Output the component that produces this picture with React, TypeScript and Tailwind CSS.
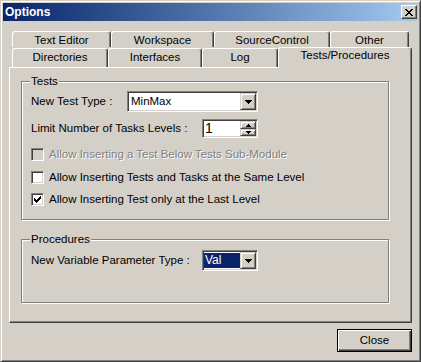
import React from "react";

const sunken =
  "border border-t-[#808080] border-l-[#808080] border-r-white border-b-white shadow-[inset_1px_1px_#404040,inset_-1px_-1px_#d4d0c8] p-px";
const raised =
  "border border-t-[#d4d0c8] border-l-[#d4d0c8] border-r-[#404040] border-b-[#404040] shadow-[inset_1px_1px_#fff,inset_-1px_-1px_#808080] bg-[#d4d0c8]";

function DownArrow() {
  return (
    <svg width="7" height="4" viewBox="0 0 7 4" shapeRendering="crispEdges">
      <path d="M0 0h7v1H0zM1 1h5v1H1zM2 2h3v1H2zM3 3h1v1H3z" fill="#000" />
    </svg>
  );
}

function SmallUp() {
  return (
    <svg width="5" height="3" viewBox="0 0 5 3" shapeRendering="crispEdges">
      <path d="M2 0h1v1H2zM1 1h3v1H1zM0 2h5v1H0z" fill="#000" />
    </svg>
  );
}

function SmallDown() {
  return (
    <svg width="5" height="3" viewBox="0 0 5 3" shapeRendering="crispEdges">
      <path d="M0 0h5v1H0zM1 1h3v1H1zM2 2h1v1H2z" fill="#000" />
    </svg>
  );
}

function CheckMark() {
  return (
    <svg width="7" height="7" viewBox="0 0 7 7" shapeRendering="crispEdges">
      <path
        d="M6 0h1v1H6zM5 1h2v1H5zM0 2h1v1H0zM4 2h3v1H4zM0 3h2v1H0zM3 3h3v1H3zM0 4h5v1H0zM1 5h3v1H1zM2 6h1v1H2z"
        fill="#000"
      />
    </svg>
  );
}

function XGlyph() {
  return (
    <svg width="8" height="7" viewBox="0 0 8 7" shapeRendering="crispEdges">
      <path
        d="M0 0h2v1H0zM6 0h2v1H6zM1 1h2v1H1zM5 1h2v1H5zM2 2h2v1H2zM4 2h2v1H4zM3 3h2v1H3zM2 4h2v1H2zM4 4h2v1H4zM1 5h2v1H1zM5 5h2v1H5zM0 6h2v1H0zM6 6h2v1H6z"
        fill="#000"
      />
    </svg>
  );
}

function Combo({
  className,
  value,
  selected,
}: {
  className: string;
  value: string;
  selected?: boolean;
}) {
  return (
    <div className={`flex h-[21px] bg-white ${sunken} ${className}`}>
      <div className="flex-1 flex items-center min-w-0">
        {selected ? (
          <span className="my-px h-[15px] flex-1 bg-[#0a246a] text-white pl-px leading-[15px] text-[12px]">
            {value}
          </span>
        ) : (
          <span className="pl-[2px]">{value}</span>
        )}
      </div>
      <div className={`w-[16px] h-full flex items-center justify-center ${raised}`}>
        <DownArrow />
      </div>
    </div>
  );
}

function Check({ checked, disabled }: { checked?: boolean; disabled?: boolean }) {
  return (
    <div
      className={`w-[13px] h-[13px] shrink-0 flex items-center justify-center ${sunken} ${
        disabled ? "bg-[#d4d0c8]" : "bg-white"
      }`}
    >
      {checked && <CheckMark />}
    </div>
  );
}

const tabBase =
  "border-t border-l border-r border-t-white border-l-white border-r-[#404040] shadow-[inset_-1px_0_#808080] rounded-t-[3px] bg-[#d4d0c8] text-center whitespace-nowrap";

export default function App() {
  return (
    <div className="w-[421px] h-[362px] bg-[#d4d0c8] border border-t-[#d4d0c8] border-l-[#d4d0c8] border-r-[#404040] border-b-[#404040] shadow-[inset_1px_1px_#fff,inset_-1px_-1px_#808080] p-[2px] flex flex-col [font-family:'Liberation_Sans',Arial,sans-serif] text-[11.5px] leading-[13px] text-black">
      {/* Title bar */}
      <div className="h-[18px] shrink-0 flex items-center pl-[2px] bg-gradient-to-r from-[#0a246a] to-[#a6caf0]">
        <span className="text-white font-bold text-[12px]">Options</span>
        <div className="ml-auto mr-[1px] w-[16px] h-[14px] flex items-center justify-center bg-[#d4d0c8] border border-t-white border-l-white border-r-[#404040] border-b-[#404040] shadow-[inset_-1px_-1px_#808080]">
          <XGlyph />
        </div>
      </div>

      <div className="pl-[6px] flex flex-col">
        {/* Tab row 1 */}
        <div className="mt-[10px] ml-[3px] flex h-[16px]">
          <div className={`${tabBase} w-[99px] h-[16px] pt-[2px]`}>Text Editor</div>
          <div className={`${tabBase} w-[103px] h-[16px] pt-[2px]`}>Workspace</div>
          <div className={`${tabBase} w-[116px] h-[16px] pt-[2px]`}>SourceControl</div>
          <div className={`${tabBase} w-[79px] h-[16px] pt-[2px]`}>Other</div>
        </div>
        {/* Tab row 2 */}
        <div className="ml-[3px] flex items-end h-[20px]">
          <div className={`${tabBase} w-[96px] h-[19px] pt-[2px]`}>Directories</div>
          <div className={`${tabBase} w-[94px] h-[19px] pt-[2px]`}>Interfaces</div>
          <div className={`${tabBase} w-[76px] h-[19px] pt-[2px]`}>Log</div>
          <div className={`${tabBase} relative z-10 w-[134px] h-[21px] -mb-px pt-[1px]`}>
            Tests/Procedures
          </div>
        </div>

        {/* Panel */}
        <div className="relative w-[403px] h-[256px] border border-t-white border-l-white border-r-[#404040] border-b-[#404040] shadow-[inset_-1px_-1px_#808080] pt-[13px] pl-[11px] flex flex-col">
          {/* Tests group */}
          <div className="relative w-[368px] h-[139px] border border-[#808080] shadow-[inset_1px_1px_#fff,1px_1px_#fff] pt-[9px] pl-[9px] flex flex-col">
            <span className="absolute left-[8px] top-[-7px] px-px bg-[#d4d0c8] leading-[13px]">Tests</span>
            <div className="flex items-center h-[21px]">
              <span className="w-[96px]">New Test Type :</span>
              <Combo className="w-[131px]" value="MinMax" />
            </div>
            <div className="mt-[7px] flex items-center h-[19px]">
              <span className="w-[171px]">Limit Number of Tasks Levels :</span>
              <div className={`flex h-[19px] w-[56px] bg-white ${sunken}`}>
                <div className="flex-1 pl-px flex items-center text-[14px] leading-[15px]">1</div>
                <div className="w-[16px] flex flex-col">
                  <div className={`h-[8px] flex items-center justify-center ${raised}`}>
                    <SmallUp />
                  </div>
                  <div className={`flex-1 flex items-center justify-center ${raised}`}>
                    <SmallDown />
                  </div>
                </div>
              </div>
            </div>
            <div className="mt-[10px] flex items-center h-[13px] gap-[5px]">
              <Check disabled />
              <span className="text-[#808080] [text-shadow:1px_1px_0_#fff]">
                Allow Inserting a Test Below Tests Sub-Module
              </span>
            </div>
            <div className="mt-[10px] flex items-center h-[13px] gap-[5px]">
              <Check />
              <span>Allow Inserting Tests and Tasks at the Same Level</span>
            </div>
            <div className="mt-[9px] flex items-center h-[13px] gap-[5px]">
              <Check checked />
              <span>Allow Inserting Test only at the Last Level</span>
            </div>
          </div>

          {/* Procedures group */}
          <div className="relative mt-[19px] w-[368px] h-[64px] border border-[#808080] shadow-[inset_1px_1px_#fff,1px_1px_#fff] pt-[10px] pl-[9px] flex flex-col">
            <span className="absolute left-[8px] top-[-7px] px-px bg-[#d4d0c8] leading-[13px]">Procedures</span>
            <div className="flex items-center h-[21px]">
              <span className="w-[171px]">New Variable Parameter Type :</span>
              <Combo className="w-[56px]" value="Val" selected />
            </div>
          </div>
        </div>

        {/* Buttons */}
        <div className="mt-[6px] w-[403px] flex justify-end">
          <div className="w-[75px] h-[23px] border border-black shadow-[inset_1px_1px_#fff,inset_-1px_-1px_#404040,inset_-2px_-2px_#808080] flex items-center justify-center">
            Close
          </div>
        </div>
      </div>
    </div>
  );
}
